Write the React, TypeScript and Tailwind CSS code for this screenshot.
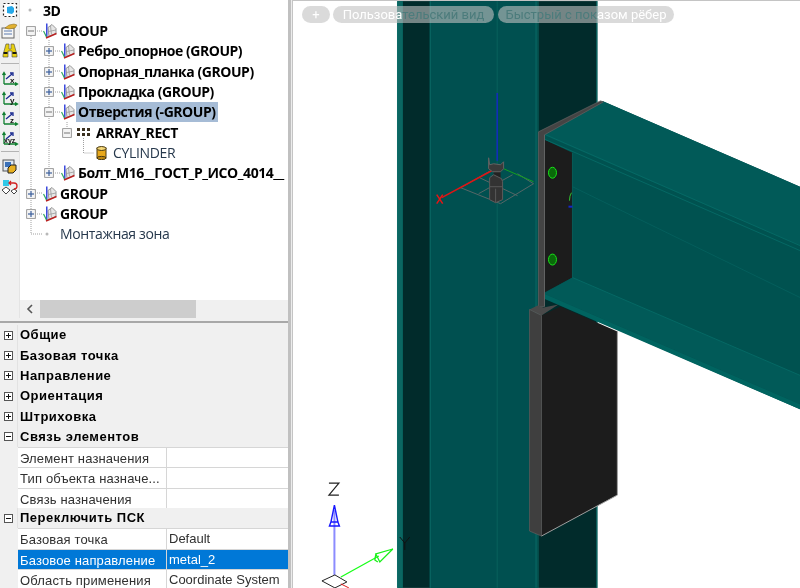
import React from 'react';

const uiFont = { fontFamily: '"Open Sans", "Noto Sans", sans-serif' };

type TreeRow = { label: string; level: number; kind: 'group' | 'array' | 'cyl' | 'dot'; expander?: 'plus' | 'minus'; selected?: boolean; bold?: boolean };

const treeRows: TreeRow[] = [
  { label: '3D', level: 0, kind: 'dot', bold: true },
  { label: 'GROUP', level: 1, kind: 'group', expander: 'minus', bold: true },
  { label: 'Ребро_опорное (GROUP)', level: 2, kind: 'group', expander: 'plus', bold: true },
  { label: 'Опорная_планка (GROUP)', level: 2, kind: 'group', expander: 'plus', bold: true },
  { label: 'Прокладка (GROUP)', level: 2, kind: 'group', expander: 'plus', bold: true },
  { label: 'Отверстия (-GROUP)', level: 2, kind: 'group', expander: 'minus', bold: true, selected: true },
  { label: 'ARRAY_RECT', level: 3, kind: 'array', expander: 'minus', bold: true },
  { label: 'CYLINDER', level: 4, kind: 'cyl' },
  { label: 'Болт_М16__ГОСТ_Р_ИСО_4014__', level: 2, kind: 'group', expander: 'plus', bold: true },
  { label: 'GROUP', level: 1, kind: 'group', expander: 'plus', bold: true },
  { label: 'GROUP', level: 1, kind: 'group', expander: 'plus', bold: true },
  { label: 'Монтажная зона', level: 1, kind: 'dot' },
];

const Expander = ({ type }: { type: 'plus' | 'minus' }) => (
  <svg width="10" height="10" viewBox="0 0 10 10" className="shrink-0">
    <rect x="0.5" y="0.5" width="9" height="9" fill="#f4f4f4" stroke="#a4a4a4" strokeWidth="1.2" rx="1" />
    <path d="M2 5h6" stroke={type === 'plus' ? '#3c5f9c' : '#8a8a8a'} strokeWidth="1.2" />
    {type === 'plus' && <path d="M5 2v6" stroke="#3c5f9c" strokeWidth="1.2" />}
  </svg>
);

const GroupIcon = () => (
  <svg width="14" height="16" viewBox="0 0 14 16" className="shrink-0">
    <path d="M5 4.5L9 1.5L13 5.5V10.5L6 13.5Z" fill="#e6e6e6" stroke="#8c8c8c" strokeWidth="0.9" />
    <path d="M7.5 3L8.5 11.5M5.5 8.5L13 7" stroke="#9a9a9a" strokeWidth="0.8" />
    <path d="M3.8 0.5V14" stroke="#1c2cd8" strokeWidth="1.3" />
    <path d="M0.5 8L3.5 14" stroke="#30a860" strokeWidth="1.2" />
    <path d="M3 15L13.5 10.5" stroke="#b82020" strokeWidth="1.4" />
  </svg>
);

const ArrayIcon = () => (
  <svg width="13" height="9" viewBox="0 0 13 9" className="shrink-0">
    {[0, 5].map(y => [0, 5, 10].map(x => <rect key={`${x}-${y}`} x={x} y={y} width="3" height="3" fill="#3a3020" />))}
  </svg>
);

const CylIcon = () => (
  <svg width="11" height="14" viewBox="0 0 11 14" className="shrink-0">
    <rect x="1" y="2" width="9" height="10" fill="#e8a81c" stroke="#4a3a10" />
    <ellipse cx="5.5" cy="2.5" rx="4.5" ry="2" fill="#f6d878" stroke="#4a3a10" />
    <ellipse cx="5.5" cy="12" rx="4.5" ry="1.6" fill="#c08810" stroke="#4a3a10" />
  </svg>
);

// левая панель инструментов
const AxisIcon = ({ letter }: { letter: string }) => (
  <svg width="18" height="15" viewBox="0 0 18 15">
    <path d="M3 13V2M1.5 4L3 1.5 4.5 4" stroke="#108030" strokeWidth="1.3" fill="none" />
    <path d="M3 13h13M14 11.5l2.5 1.5-2.5 1.5" stroke="#108030" strokeWidth="1.3" fill="none" />
    <path d="M5 8l6-5M9 2h3v3" stroke="#1a2a90" strokeWidth="1.3" fill="none" />
    <text x={letter.length > 1 ? 3 : 9} y="11.5" fontSize={letter.length > 1 ? 7 : 8} fontWeight="700" fontFamily="Liberation Sans, sans-serif" fill="#111">{letter}</text>
  </svg>
);

const Toolbar = () => (
  <div className="w-5 shrink-0 bg-[#f0f0f0] flex flex-col items-center border-r border-[#e4e4e4]">
    <svg width="16" height="16" viewBox="0 0 16 16" className="mt-[2px]">
      <rect x="1.5" y="1.5" width="13" height="13" fill="#fff" stroke="#222" strokeWidth="1.2" strokeDasharray="2 2" />
      <path d="M5 5l5-1 2 2v4l-2 2-5-1z" fill="#25a8e8" />
    </svg>
    <svg width="17" height="16" viewBox="0 0 17 16" className="mt-[5px]">
      <rect x="1" y="5" width="12" height="10" fill="#f6f6f6" stroke="#666" />
      <path d="M3 8h8M3 11h8" stroke="#5a7ab0" />
      <path d="M4 5l4-3 5-1 3 1-2 3-6 1z" fill="#e0b030" stroke="#806010" strokeWidth="0.5" />
    </svg>
    <svg width="16" height="15" viewBox="0 0 16 15" className="mt-[4px]">
      <path d="M4 1h3v5h2V1h3l3 11v2H10V8H6v6H1v-2z" fill="#e8d010" stroke="#444" strokeWidth="0.6" />
      <path d="M1.5 9h4v2h-4zM10.5 9h4v2h-4z" fill="#181810" />
    </svg>
    <div className="w-[18px] h-px bg-[#b4b4b4] mt-[5px]" />
    <div className="mt-[7px] flex flex-col gap-[5px]">
      <AxisIcon letter="x" />
      <AxisIcon letter="y" />
      <AxisIcon letter="z" />
      <AxisIcon letter="xyz" />
    </div>
    <div className="w-[18px] h-px bg-[#b4b4b4] mt-[5px]" />
    <svg width="16" height="16" viewBox="0 0 16 16" className="mt-[7px]">
      <rect x="1" y="1" width="11" height="11" fill="#dfe8f2" stroke="#555" />
      <rect x="3" y="3" width="6" height="5" fill="#3a70b8" />
      <path d="M6 9l3-3h5v5l-3 3H6z" fill="#e8b020" stroke="#222" />
    </svg>
    <svg width="18" height="17" viewBox="0 0 18 17" className="mt-[4px]">
      <rect x="2" y="1" width="6" height="6" fill="#30c8e8" />
      <path d="M1 11l4-3 4 3-4 4zM10 12l3-2 3 2-3 3z" fill="#fff" stroke="#444" />
      <path d="M9 4h4a3 3 0 0 1 0 6M10 2L8 4l2 2" stroke="#d02020" strokeWidth="1.3" fill="none" />
    </svg>
  </div>
);

const levelPad = ['pl-[21px]', 'pl-[6px]', 'pl-[24px]', 'pl-[42px]', 'pl-[76px]'];

const Tree = () => (
  <div className="relative h-[300px] bg-white overflow-hidden pt-[0.4px]" style={uiFont}>
    <svg className="absolute left-0 top-0" width="120" height="300" fill="none">
      <g stroke="#a0a0a0" strokeDasharray="1 1">
        <path d="M11 36V234M11 234H22" />
        <path d="M29 40V173" />
        <path d="M47 122V128" />
        <path d="M63.5 138V153H74" />
        <path d="M17 31h6M35 51h6M35 71h6M35 92h6M35 112h6M35 173h6M17 193h6M17 214h6" />
      </g>
      <circle cx="10" cy="10" r="1.5" fill="#b8b8b8" />
      <circle cx="27" cy="234" r="1.5" fill="#b8b8b8" />
    </svg>
    {treeRows.map((row, i) => (
      <div key={i} className={`relative h-[20.33px] flex items-center ${levelPad[row.level]}`}>
        {row.expander && <Expander type={row.expander} />}
        {row.kind === 'group' && <span className="ml-[7px] flex"><GroupIcon /></span>}
        {row.kind === 'array' && <span className="ml-[5px] flex"><ArrayIcon /></span>}
        {row.kind === 'cyl' && <CylIcon />}
        {row.kind === 'dot' && row.level === 1 && <span className="w-[32px]" />}
        <span
          className={`whitespace-nowrap text-[14px] leading-[20px] px-[2px] ${row.bold ? 'font-bold text-black tracking-[-0.45px]' : 'text-[#26384c] font-normal tracking-[-0.35px]'} ${row.selected ? 'bg-[#a6bcd6]' : ''} ${row.kind === 'group' ? 'ml-[1px]' : ''} ${row.kind === 'array' ? 'ml-[4px]' : ''} ${row.kind === 'cyl' ? 'ml-[4px]' : ''}`}
        >
          {row.label}
        </span>
      </div>
    ))}
  </div>
);

const TreeScrollbar = () => (
  <div className="h-[18px] bg-[#f0f0f0] flex items-center">
    <svg width="20" height="18" viewBox="0 0 20 18" className="shrink-0">
      <path d="M12 5L8 9l4 4" stroke="#555" strokeWidth="1.6" fill="none" />
    </svg>
    <div className="w-[156px] h-full bg-[#cdcdcd]" />
  </div>
);

type PropRow = { section?: boolean; open?: boolean; label: string; value?: string; selected?: boolean; h: string };

const propRows: PropRow[] = [
  { section: true, label: 'Общие', h: 'h-[20.3px]' },
  { section: true, label: 'Базовая точка', h: 'h-[20.3px]' },
  { section: true, label: 'Направление', h: 'h-[20.3px]' },
  { section: true, label: 'Ориентация', h: 'h-[20.3px]' },
  { section: true, label: 'Штриховка', h: 'h-[20.3px]' },
  { section: true, open: true, label: 'Связь элементов', h: 'h-[20.5px]' },
  { label: 'Элемент назначения', h: 'h-[20.3px]' },
  { label: 'Тип объекта назначе...', h: 'h-[20.3px]' },
  { label: 'Связь назначения', h: 'h-[20.3px]' },
  { section: true, open: true, label: 'Переключить ПСК', h: 'h-[20.3px]' },
  { label: 'Базовая точка', value: 'Default', h: 'h-[20.5px]' },
  { label: 'Базовое направление', value: 'metal_2', selected: true, h: 'h-[20.5px]' },
  { label: 'Область применения', value: 'Coordinate System', h: 'h-[20px]' },
];

const Properties = () => (
  <div className="flex-1 bg-[#f0f0f0] pt-[2px] overflow-hidden" style={{ fontFamily: '"Liberation Sans", Arial, sans-serif' }}>
    {propRows.map((row, i) =>
      row.section ? (
        <div key={i} className={`${row.h} flex items-center`}>
          <div className="w-[18px] shrink-0 flex justify-center border-r border-[#e2e2e2] h-full items-center">
            <svg width="9" height="9" viewBox="0 0 9 9">
              <rect x="0.5" y="0.5" width="8" height="8" fill="#fff" stroke="#555" />
              <path d="M2 4.5h5" stroke="#111" />
              {!row.open && <path d="M4.5 2v5" stroke="#111" />}
            </svg>
          </div>
          <span className="pl-[2px] text-[13px] font-bold text-black tracking-[0.5px] whitespace-nowrap">{row.label}</span>
        </div>
      ) : (
        <div key={i} className={`${row.h} flex ml-[18px] border-t border-[#d6d6d6] ${row.selected ? 'bg-[#0078d7] text-white' : 'bg-white text-[#303030]'}`}>
          <div className="w-[149px] shrink-0 pl-[2px] border-r border-[#d6d6d6] text-[13px] tracking-[0.15px] leading-[21px] whitespace-nowrap overflow-hidden">{row.label}</div>
          <div className="flex-1 pl-[2px] text-[13px] leading-[19px] whitespace-nowrap overflow-hidden">{row.value}</div>
        </div>
      )
    )}
  </div>
);

const Scene = () => (
  <svg viewBox="292 0 508 588" className="block w-full h-full" fill="none">
    {/* колонна */}
    <rect x="397" y="0" width="200" height="588" fill="#012b2b" />
    <rect x="397" y="0" width="4.5" height="588" fill="#0b6662" />
    <rect x="429" y="0" width="108" height="588" fill="#005050" />
    <path d="M396.7 0V588M401.5 0V588M429.5 0V588M535.5 0V588M537.5 0V588" stroke="#0a6a66" strokeWidth="1" />
    <path d="M496.6 0V588" stroke="#0a6460" strokeWidth="0.8" />
    <path d="M596.5 0V588" stroke="#0f7d78" strokeWidth="1" />

    {/* оси на колонне */}
    <path d="M460 187L490 170M517 173L533 183M460 187L500 203L533 183 M479 177L517 195 M512 174L478 193" stroke="#566" strokeWidth="1" />
    <path d="M496.6 92V160" stroke="#1428c8" strokeWidth="1.4" />
    <path d="M491 170L441 197" stroke="#e01414" strokeWidth="1.5" />
    <path d="M503 168L533 181" stroke="#14a020" strokeWidth="1" />
    <path d="M436 194l6 9M442 194l-6 9" stroke="#e81414" strokeWidth="1.5" />
    <rect x="493" y="168" width="7" height="12" fill="#222" />
    <path d="M488 157l1 7 4-1 7 1 3-3v7l-3 3h-8l-4-3z" fill="#3a3a3a" stroke="#626262" />
    <path d="M489 177l4-3 8 4 1 3v18l-7 3-6-3z" fill="#333" stroke="#5c5c5c" />
    <path d="M489 186h13M495 188v14" stroke="#585858" />

    {/* балка */}
    <path d="M602 100L800 186V409L543 297V133Z" fill="#005250" />
    <path d="M544 139L572 152V277L544 292Z" fill="#1c1c1c" />
    <path d="M543 131L602 100L800 186V245L545 135Z" fill="#015a58" />
    <path d="M543 133L800 245M543 138L800 250" stroke="#066a66" strokeWidth="0.9" />
    <path d="M572 152V277" stroke="#066460" strokeWidth="0.8" />
    <path d="M572 186L800 297" stroke="#066460" strokeWidth="0.7" />
    <path d="M572 277L800 375V404L543 293Z" fill="#015a58" />
    <path d="M572 277L800 375" stroke="#066a66" strokeWidth="0.9" />
    <path d="M543 293L800 404V409L543 298Z" fill="#006460" />

    {/* торцевая пластина */}
    <path d="M538 131L600 100L603 101L544 134V306H538Z" fill="#444" stroke="#5e5e5e" strokeWidth="0.8" />
    <path d="M544 134V306" stroke="#666" strokeWidth="0.8" />
    <ellipse cx="552" cy="172" rx="4" ry="5.5" fill="#0a6a0a" stroke="#18e018" strokeWidth="1" />
    <ellipse cx="552" cy="259" rx="4" ry="5.5" fill="#0a6a0a" stroke="#18e018" strokeWidth="1" />
    <path d="M571 192q-2 3-2 8" stroke="#30c030" strokeWidth="1" />
    <path d="M568 206h4" stroke="#1428c8" strokeWidth="2" />

    {/* нижняя пластина */}
    <path d="M541 315L560 306L617 331V495L541 536Z" fill="#1c1c1c" />
    <path d="M529 309L537 305L543 307L558 304L541 315Z" fill="#4a4a4a" />
    <path d="M529 309L541 315V536L529 531Z" fill="#3f3f3f" stroke="#5a5a5a" strokeWidth="0.8" />
    <path d="M617 331V495L541 536" stroke="#a0a0a0" strokeWidth="1" />

    {/* ПСК */}
    <path d="M333.5 575V510" stroke="#8c8cff" strokeWidth="2" />
    <path d="M333.5 505L330 522L337 522Z M330 522l-1.5 4h10l-1.5-4" stroke="#1818ff" strokeWidth="1.4" />
    <path d="M340 577L378 556" stroke="#18ff18" strokeWidth="1.3" />
    <path d="M392 549L375 554L379 562Z M375 554l-1 6 3 2" stroke="#18f018" strokeWidth="1.3" />
    <path d="M321 581L334 575L346 582L334 588Z" fill="#fff" stroke="#222" strokeWidth="1" />
    <path d="M340 584L348 588" stroke="#e01818" strokeWidth="1" />
    <path d="M328 483h10l-10 12h10" stroke="#222" strokeWidth="1.2" />
    <path d="M399 537l5 6 5-6M404 543v7" stroke="#111" strokeWidth="1" />
  </svg>
);

const Pill = ({ children, className }: { children: React.ReactNode; className: string }) => (
  <div className={`h-[17px] rounded-full bg-[#c1c1c1]/60 flex items-center justify-center text-[13px] leading-none text-white whitespace-nowrap ${className}`}>
    {children}
  </div>
);

const Viewport = () => (
  <div className="relative flex-1 bg-white border-t border-l border-[#c4c4c4] overflow-hidden">
    <Scene />
    <div className="absolute left-[9px] top-[5px] flex gap-[3px]" style={{ fontFamily: 'Roboto, sans-serif' }}>
      <Pill className="w-[28px]">+</Pill>
      <Pill className="w-[161px]">Пользова<span className="text-[#4c7c7c]">тельский вид</span></Pill>
      <Pill className="w-[176px] ml-[1px]"><span className="text-[#4c7c7c]">Быстрый с пок</span>азом рёбер</Pill>
    </div>
  </div>
);

export default function App() {
  return (
    <div className="w-[800px] h-[588px] flex overflow-hidden bg-white blur-[0.3px]">
      <div className="w-[288px] shrink-0 flex flex-col bg-[#f0f0f0]">
        <div className="flex">
          <Toolbar />
          <div className="flex-1 min-w-0">
            <Tree />
            <TreeScrollbar />
          </div>
        </div>
        <div className="h-[2px] mt-[3px] bg-[#a8a8a8]" />
        <Properties />
      </div>
      <div className="w-[4px] shrink-0 bg-[#c0c0c0] border-r border-[#ececec]" />
      <Viewport />
    </div>
  );
}
